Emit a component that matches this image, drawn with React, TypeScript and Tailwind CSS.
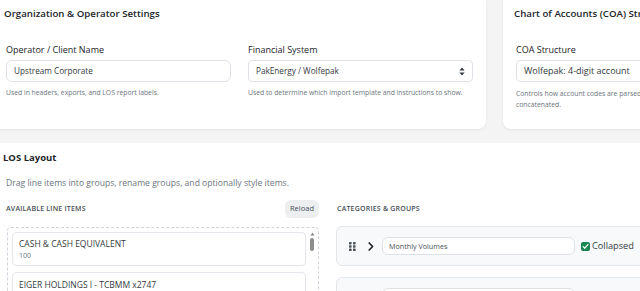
import React from "react";

const font = { fontFamily: '"Open Sans", "Noto Sans", sans-serif' };

function SelectArrows() {
  return (
    <svg width="6" height="9" viewBox="0 0 6 9" className="shrink-0">
      <path d="M3 0.5 L5.6 3.6 H0.4 Z" fill="#343a40" />
      <path d="M3 8.5 L5.6 5.4 H0.4 Z" fill="#343a40" />
    </svg>
  );
}

function Grip() {
  return (
    <svg width="7" height="9" viewBox="0 0 7 9" className="shrink-0">
      {[0, 1, 2].map((r) =>
        [0, 1].map((c) => (
          <rect key={`${r}-${c}`} x={c * 4} y={r * 3.3} width="2.6" height="2.4" rx="0.6" fill="#495057" />
        ))
      )}
    </svg>
  );
}

function Chevron() {
  return (
    <svg width="6" height="9" viewBox="0 0 6 9" className="shrink-0">
      <path d="M1.2 1 L4.6 4.5 L1.2 8" fill="none" stroke="#212529" strokeWidth="1.7" strokeLinecap="round" strokeLinejoin="round" />
    </svg>
  );
}

function Check({ on }: { on: boolean }) {
  return on ? (
    <span className="w-[9px] h-[9px] rounded-[2px] bg-[#198754] flex items-center justify-center shrink-0">
      <svg width="7" height="7" viewBox="0 0 7 7">
        <path d="M1.2 3.6 L2.8 5.2 L5.9 1.6" fill="none" stroke="white" strokeWidth="1.3" strokeLinecap="round" strokeLinejoin="round" />
      </svg>
    </span>
  ) : (
    <span className="w-[9px] h-[9px] rounded-[2px] bg-[#d1e7dd] border border-[#a3cfbb] shrink-0" />
  );
}

function GroupCard({ name, collapsed }: { name: string; collapsed: boolean }) {
  return (
    <div className="h-[40px] shrink-0 bg-[#f8f9fa] border border-[#e3e6ea] rounded-[6px] flex items-center pl-[12px]">
      <Grip />
      <span className="w-[12px]" />
      <Chevron />
      <span className="w-[8px]" />
      <div className="w-[193px] h-[18px] bg-white border border-[#dee2e6] rounded-[6px] flex items-center pl-[6px] text-[7.2px] text-[#495057]">
        {name}
      </div>
      <span className="w-[6px]" />
      <Check on={collapsed} />
      <span className="ml-[2px] text-[9.2px] text-[#343a40]">Collapsed</span>
    </div>
  );
}

export default function App() {
  return (
    <div className="w-[640px] h-[291px] overflow-hidden bg-white text-[#212529]" style={font}>
      <div className="-ml-[7px] w-[660px]">
        {/* Top settings area */}
        <div className="bg-[#f4f4f5] pb-[14px] flex gap-[17px]">
          <div className="w-[493px] shrink-0 h-[129px] bg-white rounded-b-[8px] shadow-[0_1px_3px_rgba(0,0,0,0.07)]">
            <div className="h-[28px] px-[11px] flex items-center text-[9.7px] font-semibold">
              Organization &amp; Operator Settings
            </div>
            <div className="px-[13px] pt-[16px] grid grid-cols-2 gap-x-[17px]">
              <div>
                <div className="h-[12px] leading-[12px] text-[9px] font-medium">Operator / Client Name</div>
                <div className="mt-[4px] h-[22px] border border-[#dee2e6] rounded-[6px] flex items-center px-[7px] text-[8.2px] text-[#343a40]">
                  Upstream Corporate
                </div>
                <div className="mt-[6px] h-[10px] leading-[10px] text-[6.8px] text-[#6c757d]">
                  Used in headers, exports, and LOS report labels.
                </div>
              </div>
              <div>
                <div className="h-[12px] leading-[12px] text-[9px] font-medium">Financial System</div>
                <div className="mt-[4px] h-[22px] border border-[#dee2e6] rounded-[4px] flex items-center justify-between pl-[7px] pr-[7px] text-[8.2px] text-[#343a40]">
                  <span>PakEnergy / Wolfepak</span>
                  <SelectArrows />
                </div>
                <div className="mt-[6px] h-[10px] leading-[10px] text-[6.8px] text-[#6c757d] whitespace-nowrap">
                  Used to determine which import template and instructions to show.
                </div>
              </div>
            </div>
          </div>
          <div className="flex-1 min-w-0 h-[129px] bg-white rounded-bl-[8px] shadow-[0_1px_3px_rgba(0,0,0,0.07)]">
            <div className="h-[28px] px-[11px] flex items-center text-[9.7px] font-semibold whitespace-nowrap">
              Chart of Accounts (COA) Structure
            </div>
            <div className="px-[13px] pt-[16px]">
              <div className="h-[12px] leading-[12px] text-[9px] font-medium">COA Structure</div>
              <div className="mt-[4px] h-[22px] w-[260px] border border-[#dee2e6] rounded-[4px] flex items-center px-[7px] text-[9px] text-[#343a40] whitespace-nowrap">
                Wolfepak: 4-digit account
              </div>
              <div className="mt-[6px] leading-[11px] text-[6.8px] text-[#6c757d] w-[140px]">
                Controls how account codes are parsed and concatenated.
              </div>
            </div>
          </div>
        </div>

        {/* LOS Layout */}
        <div className="px-[10px] pt-[8px]">
          <div className="h-[14px] leading-[14px] text-[9.5px] font-bold">LOS Layout</div>
          <div className="mt-[12px] ml-[3px] h-[13px] leading-[13px] text-[8.6px] text-[#6c757d]">
            Drag line items into groups, rename groups, and optionally style items.
          </div>
          <div className="mt-[10px] ml-[3px] flex gap-[17px]">
            <div className="w-[313px] shrink-0">
              <div className="h-[18px] flex items-center justify-between">
                <span className="text-[7px] font-semibold tracking-[0.2px] text-[#495057]">AVAILABLE LINE ITEMS</span>
                <span className="h-[18px] px-[5px] rounded-[6px] bg-[#eceef0] flex items-center text-[7.5px] text-[#495057]">Reload</span>
              </div>
              <div className="mt-[9px] ml-[1px] h-[80px] border border-dashed border-[#ced4da] rounded-[4px] flex pt-[4px] pl-[4px]">
                <div className="flex-1 flex flex-col gap-[6px]">
                  <div className="h-[34px] border border-[#e3e6ea] rounded-[4px] px-[6px] pt-[4px] shrink-0">
                    <div className="h-[13px] leading-[13px] text-[8.5px] font-medium text-[#343a40]">CASH &amp; CASH EQUIVALENT</div>
                    <div className="h-[11px] leading-[11px] text-[7px] text-[#6c757d]">100</div>
                  </div>
                  <div className="h-[34px] border border-[#e3e6ea] rounded-[4px] px-[6px] pt-[5px] shrink-0">
                    <div className="h-[13px] leading-[13px] text-[8.5px] font-medium text-[#343a40]">EIGER HOLDINGS I - TCBMM x2747</div>
                  </div>
                </div>
                <div className="w-[12px] flex flex-col items-center">
                  <svg width="5" height="4" viewBox="0 0 5 4">
                    <path d="M2.5 0.5 L4.5 3.5 H0.5 Z" fill="#8a8a8a" />
                  </svg>
                  <div className="mt-[2px] w-[4px] h-[13px] rounded-full bg-[#8d8d8d]" />
                </div>
              </div>
            </div>
            <div className="w-[313px] shrink-0">
              <div className="h-[18px] flex items-center">
                <span className="ml-[1px] text-[7px] font-semibold tracking-[0.2px] text-[#495057]">CATEGORIES &amp; GROUPS</span>
              </div>
              <div className="mt-[8px] flex flex-col gap-[11px]">
                <GroupCard name="Monthly Volumes" collapsed={true} />
                <GroupCard name="" collapsed={false} />
              </div>
            </div>
          </div>
        </div>
      </div>
    </div>
  );
}
